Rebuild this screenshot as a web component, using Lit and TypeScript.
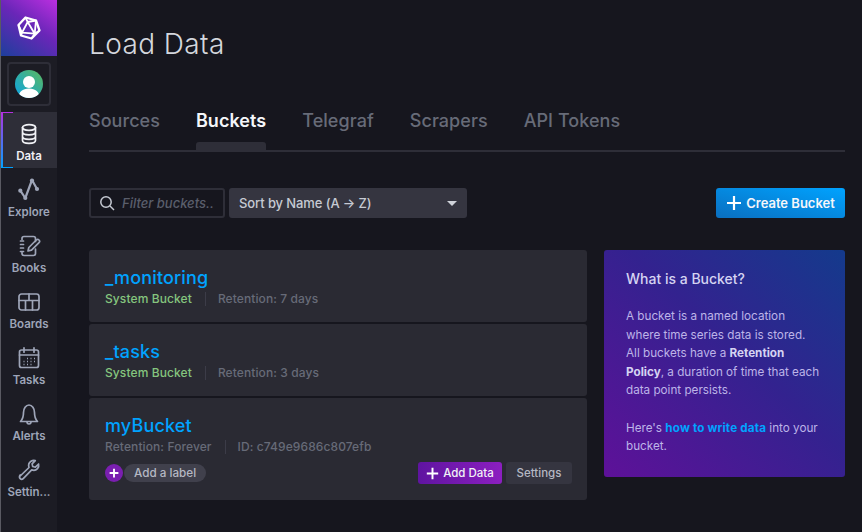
import { LitElement, html, css, svg } from 'lit';
import { customElement } from 'lit/decorators.js';

const NAV_ICONS: Record<string, unknown> = {
  Data: svg`<ellipse cx="12" cy="5.5" rx="6.5" ry="2.8"/><path d="M5.5 5.5v13c0 1.6 3 2.8 6.5 2.8s6.5-1.2 6.5-2.8v-13M5.5 10c0 1.6 3 2.8 6.5 2.8s6.5-1.2 6.5-2.800M5.5 14.500c0 1.600 3 2.800 6.500 2.800s6.500-1.200 6.500-2.800"/>`,
  Explore: svg`<path d="M3.300 12.700 8.300 20 15 2l5 9" stroke-width="2.200"/><circle cx="3.300" cy="12.700" r="2.100" class="dot"/><circle cx="8.300" cy="20" r="2.100" class="dot"/><circle cx="15" cy="2.500" r="2.100" class="dot"/><circle cx="20" cy="11" r="2.100" class="dot"/>`,
  Books: svg`<path d="M5 5.500V4.500A2 2 0 0 1 7 2.500h9.500a2 2 0 0 1 2 2v3M18.500 15v4.500a2 2 0 0 1-2 2H7a2 2 0 0 1-2-2v-1"/><path d="M3.500 7h3M3.500 10.500h3M3.500 14h3M3.500 17.500h3"/><path d="m11 17 .8-3.500 7.500-7.500a1.800 1.800 0 0 1 2.700 2.700l-7.500 7.500z"/>`,
  Boards: svg`<rect x="2" y="4" width="20" height="16" rx="2.500"/><path d="M2 10.500h20M12 4v6.500M8.500 10.500V20M15.500 10.500V20"/>`,
  Tasks: svg`<rect x="2.500" y="4" width="19" height="17.500" rx="2"/><path d="M2.500 9h19M7 1.800v4.400M17 1.800v4.400"/><path class="dots" d="M10 12.500h1M13.500 12.500h1M17 12.500h1M6.500 15.500h1M10 15.500h1M13.500 15.500h1M17 15.500h1M6.500 18.500h1M10 18.500h1M13.500 18.500h1"/>`,
  Alerts: svg`<path d="M3.500 19.500c2.500-2.500 3-5 3-9 0-4 2.400-7.500 5.500-7.500s5.500 3.500 5.500 7.500c0 4 .5 6.500 3 9z"/><path d="M10 19.800c0 1.500 1 2.200 2 2.200s2-.7 2-2.200"/>`,
  'Settin...': svg`<path d="M3.200 18 12 9.500c-.8-2.500 0-5 2-6.300 1.400-.9 3-1 4.300-.6l-3.200 3.300.6 2.600 2.700.7 3.200-3.200c.4 1.600 0 3.400-1.100 4.600-1.500 1.600-3.800 2-5.800 1.200l-8.500 8.800c-.9.900-2.200.8-3 0-.8-.8-.9-2.300 0-3.600z"/>`,
};

@customElement('app-root')
export class AppRoot extends LitElement {
  static override styles = css`
    :host {
      display: block;
      width: 862px;
      height: 532px;
      overflow: hidden;
      background: #16161e;
      font-family: 'Inter', 'Noto Sans', sans-serif;
      color: #c6cad3;
    }
    .shell {
      display: flex;
      height: 532px;
    }
    .side {
      width: 56px;
      flex: none;
      background: #1c1c24;
      border-left: 1px solid #5a5a62;
      display: flex;
      flex-direction: column;
    }
    .logo {
      height: 56px;
      background: linear-gradient(35deg, #1d3f9c 0%, #6a26b8 55%, #bb2fe0 100%);
      display: flex;
      align-items: center;
      justify-content: center;
    }
    .avatar-box {
      width: 44px;
      height: 44px;
      box-sizing: border-box;
      margin: 6px 0 6px 6px;
      border: 2px solid #2e2e38;
      border-radius: 4px;
      display: flex;
      align-items: center;
      justify-content: center;
    }
    .item {
      height: 56px;
      box-sizing: border-box;
      display: flex;
      flex-direction: column;
      align-items: center;
      padding-top: 10px;
      color: #9ea5b8;
      font-size: 11.500px;
      line-height: 15px;
      font-weight: 600;
      position: relative;
    }
    .item svg {
      width: 24px;
      height: 24px;
      margin-bottom: 3px;
      fill: none;
      stroke: currentColor;
      stroke-width: 1.700;
      stroke-linecap: round;
      stroke-linejoin: round;
    }
    .item .dot {
      fill: currentColor;
      stroke: none;
    }
    .item .dots {
      stroke-width: 1.400;
      stroke-linecap: butt;
    }
    .item.active {
      background: #2e2e38;
      color: #f0f1f5;
    }
    .item.active::before {
      content: '';
      position: absolute;
      left: 0;
      top: 0;
      bottom: 0;
      width: 12px;
      border-left: 2px solid;
      border-top: 1px solid;
      border-bottom: 1px solid;
      box-sizing: border-box;
      border-image: linear-gradient(to bottom, #b52fe0, #00a3ff) 1;
    }
    .main {
      flex: 1;
      padding: 0 17px 0 32px;
      min-width: 0;
    }
    h1 {
      margin: 0;
      padding-top: 27px;
      font-size: 28px;
      line-height: 34px;
      height: 34px;
      font-weight: 300;
      letter-spacing: 0.4px;
      color: #d4d7dd;
    }
    .tabs {
      margin-top: 40px;
      height: 51px;
      box-sizing: border-box;
      display: flex;
      gap: 36px;
      border-bottom: 2px solid #2e2e38;
    }
    .tab {
      font-size: 18px;
      font-weight: 500;
      letter-spacing: 0.05px;
      line-height: 40px;
      height: 49px;
      color: #676b78;
      position: relative;
    }
    .tab.active {
      color: #f5f6fa;
      font-weight: 600;
    }
    .tab.active::after {
      content: '';
      position: absolute;
      left: 0;
      right: 0;
      bottom: -2px;
      height: 10px;
      background: #2e2e38;
      border-radius: 3px 3px 0 0;
    }
    .toolbar {
      margin-top: 36px;
      display: flex;
      gap: 4px;
      height: 30px;
    }
    .search {
      width: 136px;
      box-sizing: border-box;
      border: 2px solid #2e2e38;
      border-radius: 3px;
      display: flex;
      align-items: center;
      padding-left: 8px;
      gap: 7px;
      font-size: 13px;
      font-weight: 500;
      font-style: italic;
      color: #5a5e6b;
      overflow: hidden;
      white-space: nowrap;
    }
    .sort {
      width: 238px;
      box-sizing: border-box;
      background: #353540;
      border-radius: 3px;
      display: flex;
      align-items: center;
      justify-content: space-between;
      padding: 0 10px;
      font-size: 13px;
      font-weight: 500;
      letter-spacing: -0.1px;
      color: #c6cad3;
    }
    .caret {
      width: 0;
      height: 0;
      border-left: 5.500px solid transparent;
      border-right: 5.500px solid transparent;
      border-top: 5.500px solid #d0d3da;
    }
    .create {
      margin-left: auto;
      width: 129px;
      box-sizing: border-box;
      border-radius: 3px;
      background: linear-gradient(to top right, #0a6fc0, #00a3ff);
      display: flex;
      align-items: center;
      justify-content: center;
      gap: 4px;
      color: #f5f6fa;
      font-size: 13px;
      font-weight: 600;
    }
    .content {
      margin-top: 32px;
      display: flex;
      gap: 17px;
      align-items: flex-start;
    }
    .list {
      width: 498px;
      display: flex;
      flex-direction: column;
      gap: 2px;
    }
    .card {
      background: #2a2a33;
      border-radius: 3px;
      padding: 16px 15px 14px 16px;
      box-sizing: border-box;
      height: 72px;
    }
    .card.tall {
      height: 102px;
    }
    .name {
      font-size: 18px;
      font-weight: 500;
      letter-spacing: 0.15px;
      line-height: 23px;
      color: #00a3ff;
    }
    .meta {
      margin-top: 2px;
      display: flex;
      align-items: center;
      font-size: 12px;
      font-weight: 500;
      letter-spacing: 0.1px;
      line-height: 16px;
      color: #676b78;
    }
    .meta .sys {
      color: #85c57e;
    }
    .sep {
      width: 1px;
      height: 14px;
      margin: 0 12px 0 13px;
      background: #3c3c48;
    }
    .row {
      margin-top: 8px;
      display: flex;
      align-items: center;
      height: 20px;
    }
    .plus {
      width: 18px;
      height: 18px;
      border-radius: 50%;
      background: #7a1fb0;
      display: flex;
      align-items: center;
      justify-content: center;
    }
    .label {
      margin-left: 1px;
      height: 18px;
      line-height: 18px;
      padding: 0 10px;
      border-radius: 9px;
      background: #40404c;
      color: #b5b8c3;
      font-size: 11.700px;
      font-weight: 500;
    }
    .actions {
      margin-left: auto;
      display: flex;
      gap: 4px;
      align-items: center;
    }
    .btn {
      height: 22px;
      display: flex;
      align-items: center;
      gap: 4px;
      box-sizing: border-box;
      border-radius: 3px;
      font-size: 11.500px;
      font-weight: 500;
    }
    .btn.add {
      width: 84px;
      justify-content: center;
      background: linear-gradient(to right, #5f14a0, #8c1fc0);
      color: #f0f1f5;
    }
    .btn.set {
      width: 66px;
      justify-content: center;
      background: #353540;
      color: #b5b8c3;
    }
    .panel {
      width: 241px;
      height: 227px;
      box-sizing: border-box;
      padding: 20px 22px;
      border-radius: 3px;
      background: linear-gradient(to top right, #5e1199 0%, #33228f 55%, #143a8c 100%);
      color: #bdb4e8;
      font-size: 11.700px;
      line-height: 18.600px;
    }
    .panel h2 {
      margin: 0 0 19px;
      font-size: 14px;
      line-height: 18px;
      font-weight: 500;
      color: #d5d3f2;
    }
    .panel p {
      margin: 0 0 18.600px;
    }
    .panel b {
      font-weight: 700;
      color: #d5d3f2;
    }
    .panel a {
      color: #00a3ff;
      font-weight: 700;
      letter-spacing: 0.15px;
      text-decoration: none;
    }
  `;

  private plusIcon(size: number, width: number) {
    return html`<svg width=${size} height=${size} viewBox="0 0 16 16" fill="none" stroke="#fff" stroke-width=${width}>
      <path d="M8 1v14M1 8h14" />
    </svg>`;
  }

  private navItem(name: string, active = false) {
    return html`<div class="item ${active ? 'active' : ''}">
      <svg viewBox="0 0 24 24">${NAV_ICONS[name]}</svg>
      <span>${name}</span>
    </div>`;
  }

  override render() {
    return html`
      <div class="shell">
        <nav class="side">
          <div class="logo">
            <svg width="24" height="24" viewBox="0 0 24 24" fill="none" stroke="#fff" stroke-width="1.800" stroke-linejoin="round">
              <path d="M8.500 1.500 19 4.500 22.500 14.500 14.500 22.500 4 19.500 1.500 9z" stroke-width="2.300" />
              <path d="M10.700 6 5 16.700 17.700 17.700z" />
              <path d="M8.500 1.500 10.700 6 19 4.500 17.700 17.700 22.500 14.500M1.500 9 5 16.700 4 19.500M17.700 17.700 14.500 22.500" />
            </svg>
          </div>
          <div class="avatar-box">
            <svg width="28" height="28" viewBox="0 0 28 28">
              <defs>
                <linearGradient id="av" x1="0" y1="1" x2="1" y2="0">
                  <stop offset="0" stop-color="#0aa5e8" />
                  <stop offset="1" stop-color="#5cb85c" />
                </linearGradient>
                <clipPath id="ac"><circle cx="14" cy="14" r="14" /></clipPath>
              </defs>
              <circle cx="14" cy="14" r="14" fill="url(#av)" />
              <g clip-path="url(#ac)" fill="#fff">
                <circle cx="14" cy="12" r="6" />
                <path d="M3.500 28c0-6 4-9.500 10.500-9.500s10.500 3.500 10.500 9.500z" />
              </g>
            </svg>
          </div>
          ${this.navItem('Data', true)} ${this.navItem('Explore')} ${this.navItem('Books')}
          ${this.navItem('Boards')} ${this.navItem('Tasks')} ${this.navItem('Alerts')}
          ${this.navItem('Settin...')}
        </nav>
        <main class="main">
          <h1>Load Data</h1>
          <div class="tabs">
            <div class="tab">Sources</div>
            <div class="tab active">Buckets</div>
            <div class="tab">Telegraf</div>
            <div class="tab">Scrapers</div>
            <div class="tab">API Tokens</div>
          </div>
          <div class="toolbar">
            <div class="search">
              <svg width="16" height="16" viewBox="0 0 16 16" fill="none" stroke="#c6cad3" stroke-width="1.500" style="flex:none">
                <circle cx="7" cy="7" r="5.200" />
                <path d="m11 11 4 4" />
              </svg>
              <span>Filter buckets..</span>
            </div>
            <div class="sort"><span>Sort by Name (A → Z)</span><span class="caret"></span></div>
            <div class="create">${this.plusIcon(16, 2.200)}<span>Create Bucket</span></div>
          </div>
          <div class="content">
            <div class="list">
              <div class="card">
                <div class="name">_monitoring</div>
                <div class="meta"><span class="sys">System Bucket</span><span class="sep"></span><span>Retention: 7 days</span></div>
              </div>
              <div class="card">
                <div class="name">_tasks</div>
                <div class="meta"><span class="sys">System Bucket</span><span class="sep"></span><span>Retention: 3 days</span></div>
              </div>
              <div class="card tall">
                <div class="name">myBucket</div>
                <div class="meta"><span>Retention: Forever</span><span class="sep"></span><span>ID: c749e9686c807efb</span></div>
                <div class="row">
                  <span class="plus">${this.plusIcon(10, 3)}</span>
                  <span class="label">Add a label</span>
                  <div class="actions">
                    <div class="btn add">${this.plusIcon(13, 2.400)}<span>Add Data</span></div>
                    <div class="btn set">Settings</div>
                  </div>
                </div>
              </div>
            </div>
            <aside class="panel">
              <h2>What is a Bucket?</h2>
              <p>A bucket is a named location<br />where time series data is stored.<br />All buckets have a <b>Retention<br />Policy</b>, a duration of time that each<br />data point persists.</p>
              <p>Here's <a>how to write data</a> into your<br />bucket.</p>
            </aside>
          </div>
        </main>
      </div>
    `;
  }
}
